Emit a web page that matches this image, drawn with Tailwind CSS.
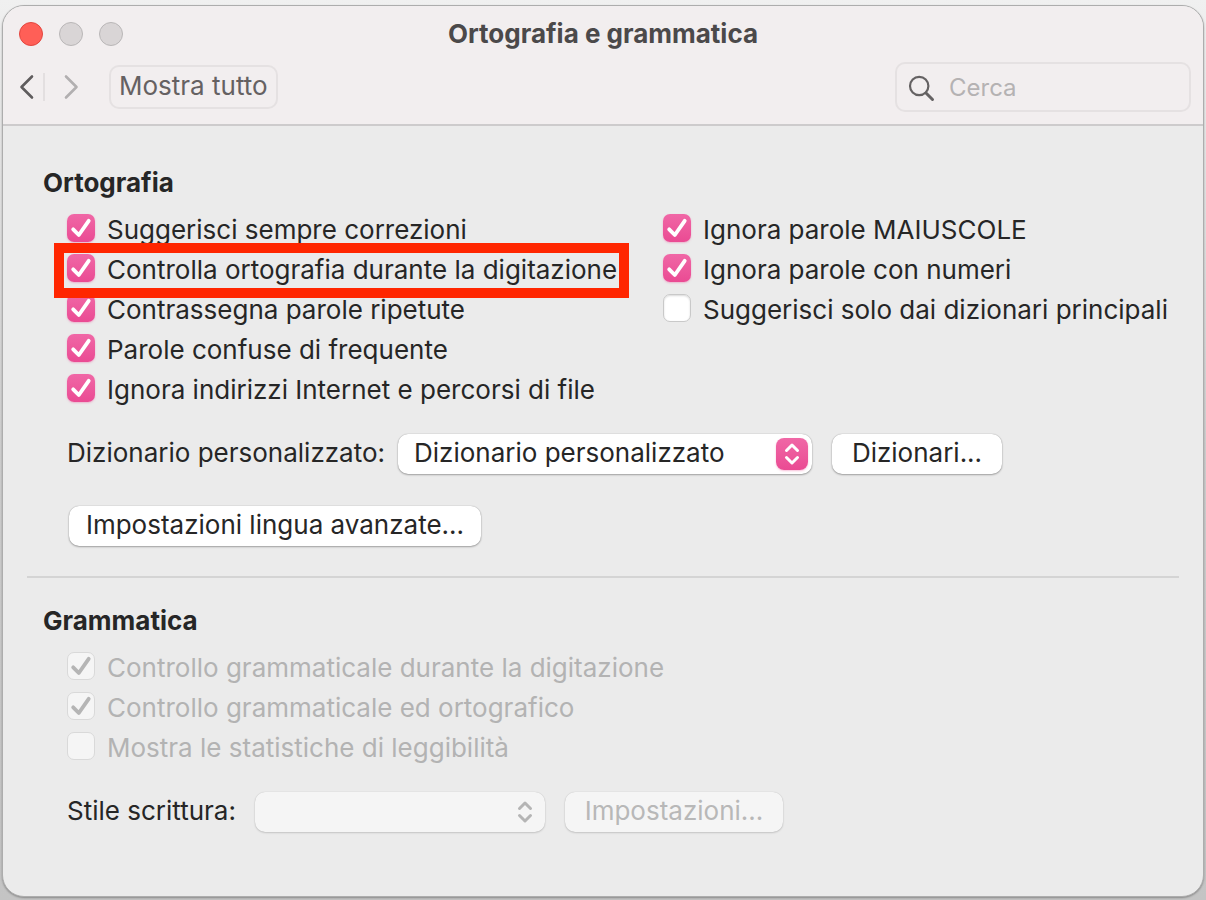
<!DOCTYPE html>
<html lang="it">
<head>
  <meta charset="UTF-8" />
  <meta name="viewport" content="width=device-width, initial-scale=1" />
  <title>Ortografia e grammatica</title>
  <script src="https://cdn.jsdelivr.net/npm/@tailwindcss/browser@4"></script>
</head>
<body class="min-h-screen flex flex-col bg-linear-to-b from-[#f0f0f0] via-[#cfcfcf] to-[#c4c4c4] px-[2px] pt-[5px] pb-[3px] font-['Inter',sans-serif] text-[26px] leading-[30px] text-[#262626]">

  <div class="flex-1 flex flex-col rounded-[22px] border border-[#adadad] bg-[#ebebeb] overflow-hidden shadow-[0_1px_2px_rgba(0,0,0,0.3)]">

    <!-- Barra del titolo -->
    <header class="bg-[#f2eeef] border-b-2 border-[#cdcbcc] pb-3 text-[#4b494a]">
      <div class="relative flex items-center justify-center h-14">
        <div class="absolute left-4 flex gap-4">
          <button type="button" aria-label="Chiudi" class="size-6 rounded-full bg-[#ff5f57] border border-[#e2463f]"></button>
          <button type="button" aria-label="Riduci" class="size-6 rounded-full bg-[#d9d5d6] border border-[#b9b6b7]"></button>
          <button type="button" aria-label="Ingrandisci" class="size-6 rounded-full bg-[#d9d5d6] border border-[#b9b6b7]"></button>
        </div>
        <h1 class="font-bold">Ortografia e grammatica</h1>
      </div>
      <div class="flex items-center pl-4 pr-3">
        <button type="button" aria-label="Indietro" class="w-6">
          <svg class="w-4 h-7" viewBox="0 0 16 28" fill="none" stroke="#5f5c5d" stroke-width="2.6" stroke-linecap="round" stroke-linejoin="round"><path d="M13 3.5L2.5 14L13 24.5" /></svg>
        </button>
        <span class="w-[2px] h-7 bg-[#e3dfe0]"></span>
        <button type="button" aria-label="Avanti" class="w-16 pl-[18px]">
          <svg class="w-4 h-7" viewBox="0 0 16 28" fill="none" stroke="#b2afb0" stroke-width="2.6" stroke-linecap="round" stroke-linejoin="round"><path d="M3 3.5L13.5 14L3 24.5" /></svg>
        </button>
        <button type="button" class="h-11 px-2 pb-[2px] rounded-[10px] border-2 border-[#e5e1e2] text-[#656162]">Mostra tutto</button>
        <label class="relative ml-auto">
          <svg class="absolute left-3 top-3 size-7" viewBox="0 0 28 28" fill="none" stroke="#656263" stroke-width="2.2" stroke-linecap="round"><circle cx="12.2" cy="12" r="9.2" /><path d="M19 19L25.500 25.500" stroke-width="3" /></svg>
          <input type="search" aria-label="Cerca" placeholder="Cerca" class="block w-[296px] h-[50px] pl-[52px] pr-3 rounded-[10px] border-2 border-[#e5e1e2] bg-transparent text-[24px] placeholder:text-[#b5b2b3]" />
        </label>
      </div>
    </header>

    <main class="px-6 pt-[42px] pb-16">

      <!-- Ortografia -->
      <section class="px-4">
        <h2 class="font-bold">Ortografia</h2>
        <div class="grid grid-cols-[596px_1fr] items-start mt-3 pl-6">
          <div class="flex flex-col items-start">
            <label class="flex items-center gap-3 h-10">
              <span class="relative mb-1 size-7">
                <input type="checkbox" checked class="block appearance-none size-7 rounded-[7px] bg-linear-to-b from-[#f067a6] to-[#ea4a93] shadow-[0_1px_2px_rgba(234,74,147,0.35)]" />
                <svg class="absolute inset-0 pointer-events-none" viewBox="0 0 28 28" fill="none" stroke="#fff" stroke-width="3.8" stroke-linecap="round" stroke-linejoin="round"><path d="M6.2 15.3L11.8 21L21.7 6.8" /></svg>
              </span>
              Suggerisci sempre correzioni
            </label>
            <label class="relative flex items-center gap-3 h-10">
              <span class="relative mb-1 size-7">
                <input type="checkbox" checked class="block appearance-none size-7 rounded-[7px] bg-linear-to-b from-[#f067a6] to-[#ea4a93] shadow-[0_1px_2px_rgba(234,74,147,0.35)]" />
                <svg class="absolute inset-0 pointer-events-none" viewBox="0 0 28 28" fill="none" stroke="#fff" stroke-width="3.8" stroke-linecap="round" stroke-linejoin="round"><path d="M6.2 15.3L11.8 21L21.7 6.8" /></svg>
              </span>
              Controlla ortografia durante la digitazione
              <!-- Riquadro di evidenziazione -->
              <span class="absolute z-10 -left-[13px] -right-3 -top-[7px] -bottom-2 border-[10px] border-[#ff2600] pointer-events-none"></span>
            </label>
            <label class="flex items-center gap-3 h-10">
              <span class="relative mb-1 size-7">
                <input type="checkbox" checked class="block appearance-none size-7 rounded-[7px] bg-linear-to-b from-[#f067a6] to-[#ea4a93] shadow-[0_1px_2px_rgba(234,74,147,0.35)]" />
                <svg class="absolute inset-0 pointer-events-none" viewBox="0 0 28 28" fill="none" stroke="#fff" stroke-width="3.8" stroke-linecap="round" stroke-linejoin="round"><path d="M6.2 15.3L11.8 21L21.7 6.8" /></svg>
              </span>
              Contrassegna parole ripetute
            </label>
            <label class="flex items-center gap-3 h-10">
              <span class="relative mb-1 size-7">
                <input type="checkbox" checked class="block appearance-none size-7 rounded-[7px] bg-linear-to-b from-[#f067a6] to-[#ea4a93] shadow-[0_1px_2px_rgba(234,74,147,0.35)]" />
                <svg class="absolute inset-0 pointer-events-none" viewBox="0 0 28 28" fill="none" stroke="#fff" stroke-width="3.8" stroke-linecap="round" stroke-linejoin="round"><path d="M6.2 15.3L11.8 21L21.7 6.8" /></svg>
              </span>
              Parole confuse di frequente
            </label>
            <label class="flex items-center gap-3 h-10">
              <span class="relative mb-1 size-7">
                <input type="checkbox" checked class="block appearance-none size-7 rounded-[7px] bg-linear-to-b from-[#f067a6] to-[#ea4a93] shadow-[0_1px_2px_rgba(234,74,147,0.35)]" />
                <svg class="absolute inset-0 pointer-events-none" viewBox="0 0 28 28" fill="none" stroke="#fff" stroke-width="3.8" stroke-linecap="round" stroke-linejoin="round"><path d="M6.2 15.3L11.8 21L21.7 6.8" /></svg>
              </span>
              Ignora indirizzi Internet e percorsi di file
            </label>
          </div>
          <div class="flex flex-col items-start whitespace-nowrap">
            <label class="flex items-center gap-3 h-10">
              <span class="relative mb-1 size-7">
                <input type="checkbox" checked class="block appearance-none size-7 rounded-[7px] bg-linear-to-b from-[#f067a6] to-[#ea4a93] shadow-[0_1px_2px_rgba(234,74,147,0.35)]" />
                <svg class="absolute inset-0 pointer-events-none" viewBox="0 0 28 28" fill="none" stroke="#fff" stroke-width="3.8" stroke-linecap="round" stroke-linejoin="round"><path d="M6.2 15.3L11.8 21L21.7 6.8" /></svg>
              </span>
              Ignora parole MAIUSCOLE
            </label>
            <label class="flex items-center gap-3 h-10">
              <span class="relative mb-1 size-7">
                <input type="checkbox" checked class="block appearance-none size-7 rounded-[7px] bg-linear-to-b from-[#f067a6] to-[#ea4a93] shadow-[0_1px_2px_rgba(234,74,147,0.35)]" />
                <svg class="absolute inset-0 pointer-events-none" viewBox="0 0 28 28" fill="none" stroke="#fff" stroke-width="3.8" stroke-linecap="round" stroke-linejoin="round"><path d="M6.2 15.3L11.8 21L21.7 6.8" /></svg>
              </span>
              Ignora parole con numeri
            </label>
            <label class="flex items-center gap-3 h-10">
              <span class="mb-1 size-7">
                <input type="checkbox" class="block appearance-none size-7 rounded-[7px] bg-white border border-[#c9c9c9] shadow-[inset_0_1px_2px_rgba(0,0,0,0.15)]" />
              </span>
              Suggerisci solo dai dizionari principali
            </label>
          </div>
        </div>

        <div class="flex items-center mt-6 pl-6">
          <label for="dizionario" class="w-[331px] pb-[2px]">Dizionario personalizzato:</label>
          <div class="relative">
            <select id="dizionario" class="block appearance-none w-[414px] h-10 pl-4 pr-12 pb-[2px] rounded-[10px] bg-white shadow-[0_0_1px_rgba(0,0,0,0.35),0_1px_2px_rgba(0,0,0,0.3)]">
              <option>Dizionario personalizzato</option>
            </select>
            <span class="absolute right-1 top-1 size-8 rounded-[8px] bg-linear-to-b from-[#f067a6] to-[#ea4a93] shadow-[0_1px_2px_rgba(234,74,147,0.35)] pointer-events-none">
              <svg viewBox="0 0 32 32" fill="none" stroke="#fff" stroke-width="3" stroke-linecap="round" stroke-linejoin="round"><path d="M10.5 12.500L16 7L21.5 12.500M10.5 19.500L16 25L21.5 19.500" /></svg>
            </span>
          </div>
          <button type="button" class="ml-5 h-10 w-[170px] pb-[2px] rounded-[10px] bg-white shadow-[0_0_1px_rgba(0,0,0,0.35),0_1px_2px_rgba(0,0,0,0.3)]">Dizionari...</button>
        </div>

        <div class="mt-8 pl-[26px]">
          <button type="button" class="block h-10 w-[412px] pb-[2px] rounded-[10px] bg-white shadow-[0_0_1px_rgba(0,0,0,0.35),0_1px_2px_rgba(0,0,0,0.3)]">Impostazioni lingua avanzate...</button>
        </div>
      </section>

      <hr class="mt-[30px] border-t-2 border-[#d4d4d4]" />

      <!-- Grammatica -->
      <section class="px-4 mt-7">
        <h2 class="font-bold">Grammatica</h2>
        <div class="flex flex-col items-start mt-3 pl-6 text-[#b3b3b3]">
          <label class="flex items-center gap-3 h-10">
            <span class="relative mb-1 size-7">
              <input type="checkbox" checked disabled class="block appearance-none size-7 rounded-[7px] bg-[#f5f5f5] border border-[#d9d9d9]" />
              <svg class="absolute inset-0 pointer-events-none" viewBox="0 0 28 28" fill="none" stroke="#b5b5b5" stroke-width="3.8" stroke-linecap="round" stroke-linejoin="round"><path d="M6.2 15.3L11.8 21L21.7 6.8" /></svg>
            </span>
            Controllo grammaticale durante la digitazione
          </label>
          <label class="flex items-center gap-3 h-10">
            <span class="relative mb-1 size-7">
              <input type="checkbox" checked disabled class="block appearance-none size-7 rounded-[7px] bg-[#f5f5f5] border border-[#d9d9d9]" />
              <svg class="absolute inset-0 pointer-events-none" viewBox="0 0 28 28" fill="none" stroke="#b5b5b5" stroke-width="3.8" stroke-linecap="round" stroke-linejoin="round"><path d="M6.2 15.3L11.8 21L21.7 6.8" /></svg>
            </span>
            Controllo grammaticale ed ortografico
          </label>
          <label class="flex items-center gap-3 h-10">
            <span class="mb-1 size-7">
              <input type="checkbox" disabled class="block appearance-none size-7 rounded-[7px] bg-[#f5f5f5] border border-[#d9d9d9]" />
            </span>
            Mostra le statistiche di leggibilità
          </label>
        </div>

        <div class="flex items-center mt-6 pl-6">
          <label for="stile" class="w-[188px] pb-[2px]">Stile scrittura:</label>
          <div class="relative">
            <select id="stile" disabled class="block appearance-none w-[290px] h-10 pl-4 pr-12 rounded-[10px] bg-[#f5f5f5] opacity-100 shadow-[0_0_1px_rgba(0,0,0,0.2),0_1px_2px_rgba(0,0,0,0.15)]">
              <option></option>
            </select>
            <svg class="absolute right-1 top-1 size-8 pointer-events-none" viewBox="0 0 32 32" fill="none" stroke="#b5b5b5" stroke-width="3" stroke-linecap="round" stroke-linejoin="round"><path d="M10.5 12.500L16 7L21.5 12.500M10.5 19.500L16 25L21.5 19.500" /></svg>
          </div>
          <button type="button" disabled class="ml-5 h-10 w-[218px] pb-[2px] rounded-[10px] bg-[#f5f5f5] text-[#b8b8b8] shadow-[0_0_1px_rgba(0,0,0,0.2),0_1px_2px_rgba(0,0,0,0.15)]">Impostazioni...</button>
        </div>
      </section>

    </main>
  </div>

</body>
</html>
